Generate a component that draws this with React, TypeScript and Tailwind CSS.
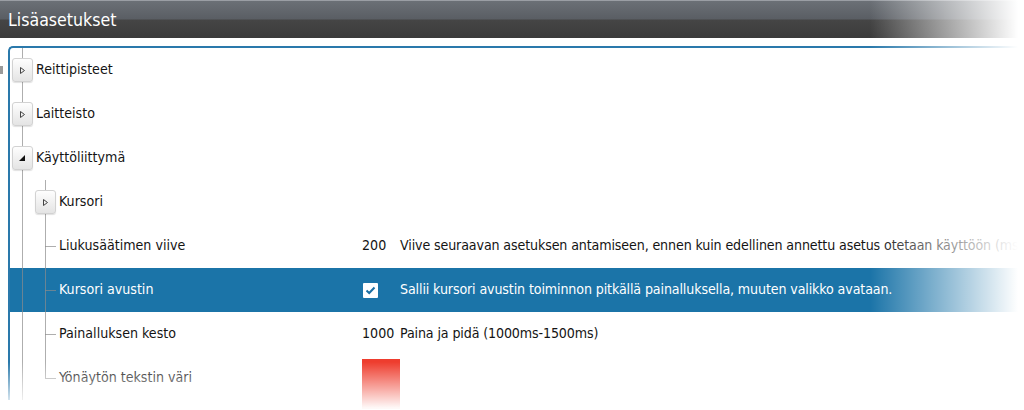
import React from 'react';

// Tree line colour, semi transparent so it shows on both white and blue rows
const LINE = 'bg-[#8c8c8c]/70';

function Expander({ open }: { open?: boolean }) {
  return (
    <div className="col-start-1 row-start-1 flex h-[24px] w-[21px] items-center justify-center rounded-[3px] border border-[#d2d2d2] bg-gradient-to-b from-[#fefefe] to-[#e4e4e4] shadow-[0_1px_1px_rgba(0,0,0,0.12)]">
      {open ? (
        <svg width="8" height="8" viewBox="0 0 8 8">
          <polygon points="7,1 7,7 1,7" fill="#111" />
        </svg>
      ) : (
        <svg width="7" height="9" viewBox="0 0 7 9">
          <polygon points="1.5,1.5 5.5,4.5 1.5,7.5" fill="none" stroke="#444" strokeWidth="1" />
        </svg>
      )}
    </div>
  );
}

function Gutter1({ children }: { children?: React.ReactNode }) {
  return (
    <div className="grid h-full w-[24px] shrink-0 place-items-center">
      <div className={`col-start-1 row-start-1 h-full w-px ${LINE}`} />
      {children}
    </div>
  );
}

function Gutter2({ leaf, last, children }: { leaf?: boolean; last?: boolean; children?: React.ReactNode }) {
  return (
    <div className="grid h-full w-[22px] shrink-0 place-items-center">
      <div className={`col-start-1 row-start-1 w-px ${LINE} ${last ? 'h-[22px] self-start' : 'h-full'}`} />
      {leaf && <div className={`col-start-1 row-start-1 h-px w-[11px] justify-self-end ${LINE}`} />}
      {children}
    </div>
  );
}

function Checkbox() {
  return (
    <div className="ml-px flex h-[15px] w-[15px] items-center justify-center rounded-[1px] bg-white">
      <svg width="11" height="9" viewBox="0 0 11 9">
        <polyline points="1.5,4.5 4.2,7 9.5,1.5" fill="none" stroke="#1b6fa3" strokeWidth="2" />
      </svg>
    </div>
  );
}

type Leaf = {
  label: string;
  value?: React.ReactNode;
  desc?: string;
  active?: boolean;
  last?: boolean;
};

const leaves: Leaf[] = [
  {
    label: 'Liukusäätimen viive',
    value: '200',
    desc: 'Viive seuraavan asetuksen antamiseen, ennen kuin edellinen annettu asetus otetaan käyttöön (ms)',
  },
  {
    label: 'Kursori avustin',
    value: <Checkbox />,
    desc: 'Sallii kursori avustin toiminnon pitkällä painalluksella, muuten valikko avataan.',
    active: true,
  },
  { label: 'Painalluksen kesto', value: '1000', desc: 'Paina ja pidä (1000ms-1500ms)' },
  {
    label: 'Yönäytön tekstin väri',
    value: <div className="mt-[3px] h-[50px] w-[39px] self-start bg-[#ee3d2e]" />,
    last: true,
  },
];

export default function App() {
  return (
    <div className="relative h-[410px] w-[1024px] overflow-hidden bg-white font-['Liberation_Sans_Narrow','DejaVu_Sans_Condensed',Roboto,sans-serif] text-[14.1px] text-[#141414]">
      <div className="flex h-[38px] items-center border-t border-[#9a9ea4] bg-[linear-gradient(to_bottom,#6b7076_0%,#5a5e64_48%,#454545_52%,#3b3b3b_100%)] px-[8px] pt-[1px] text-[17.6px] text-white">
        Lisäasetukset
      </div>

      <div className="mt-[8px] flex">
        <div className="w-[8px] shrink-0 pt-[20px]">
          <div className="h-[8px] w-[3px] bg-[#9a9a9a]" />
        </div>
        <div className="flex-1 rounded-tl-[5px] border-l-2 border-t-2 border-[#2a79ab]">
          {['Reittipisteet', 'Laitteisto'].map((t) => (
            <div key={t} className="flex h-[44px] items-center">
              <Gutter1>
                <Expander />
              </Gutter1>
              <span className="ml-[2px]">{t}</span>
            </div>
          ))}
          <div className="flex h-[44px] items-center">
            <Gutter1>
              <Expander open />
            </Gutter1>
            <span className="ml-[2px]">Käyttöliittymä</span>
          </div>
          <div className="flex h-[44px] items-center">
            <Gutter1 />
            <Gutter2>
              <Expander />
            </Gutter2>
            <span className="ml-[3px]">Kursori</span>
          </div>
          {leaves.map((l) => (
            <div
              key={l.label}
              className={`flex h-[44px] items-center ${l.active ? 'bg-[#1b74a8] text-white' : ''}`}
            >
              <Gutter1 />
              <Gutter2 leaf last={l.last} />
              <span className="ml-[3px] w-[303px] shrink-0">{l.label}</span>
              <div className="flex w-[38px] shrink-0 items-center self-stretch">{l.value}</div>
              {l.desc && <span className="whitespace-nowrap tracking-[-0.12px]">{l.desc}</span>}
            </div>
          ))}
        </div>
      </div>

      {/* fades towards the right and bottom edges */}
      <div className="pointer-events-none absolute inset-0 bg-[linear-gradient(to_right,rgba(255,255,255,0)_870px,#fff_1018px)]" />
      <div className="pointer-events-none absolute inset-0 bg-[linear-gradient(to_bottom,rgba(255,255,255,0)_362px,rgba(255,255,255,0.97)_408px)]" />
    </div>
  );
}
